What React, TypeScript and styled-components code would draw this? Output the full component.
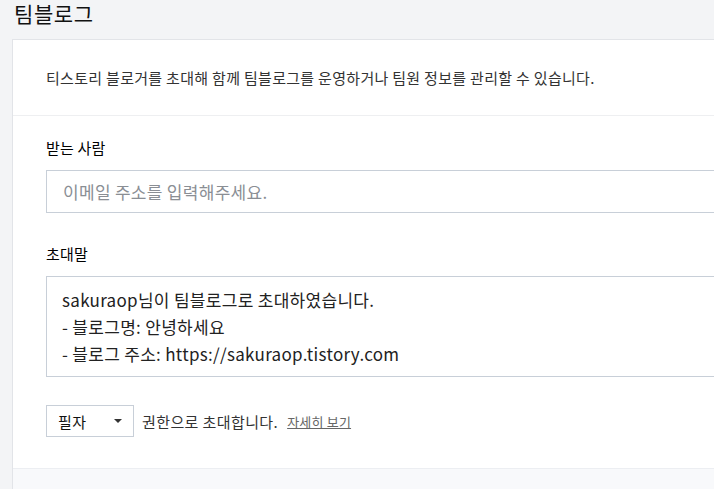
import React from "react";
import styled, { createGlobalStyle } from "styled-components";

const Global = createGlobalStyle`
  html, body { margin: 0; padding: 0; background: #f3f4f6; overflow: hidden; }
  body { font-family: "Noto Sans CJK KR", "Noto Sans", sans-serif; color: #222; }
`;

const Page = styled.div`
  padding: 0 0 0 12px;
  width: 820px;
`;

const Title = styled.h2`
  margin: 0;
  padding: 1px 0 0 2px;
  height: 38px;
  font-size: 21px;
  line-height: 25px;
  font-weight: 400;
  letter-spacing: 0.6px;
  color: #111;
`;

const Card = styled.div`
  background: #fff;
  border: 1px solid #e2e4e8;
`;

const Intro = styled.p`
  margin: 0;
  padding: 27px 33px 26px;
  font-size: 15px;
  line-height: 22px;
  letter-spacing: 0.3px;
  color: #333;
  border-bottom: 1px solid #eeeff1;
`;

const Form = styled.div`
  padding: 22px 0 31px 33px;
  border-bottom: 1px solid #eceef2;
`;

const Label = styled.div<{ $top?: number }>`
  font-size: 15px;
  line-height: 20px;
  font-weight: 400;
  letter-spacing: 0.2px;
  color: #000;
  margin-top: ${(p) => p.$top ?? 0}px;
  margin-bottom: 12px;
`;

const Input = styled.div`
  box-sizing: border-box;
  height: 43px;
  border: 1px solid #c8cfd8;
  padding: 0 16px;
  font-size: 17px;
  line-height: 41px;
  letter-spacing: 0.3px;
  color: #8a8e94;
`;

const TextArea = styled.div`
  box-sizing: border-box;
  height: 101px;
  border: 1px solid #c8cfd8;
  padding: 9px 15px 8px;
  font-size: 17px;
  line-height: 27px;
  letter-spacing: 0.3px;
  color: #222;
`;

const Row = styled.div`
  display: flex;
  align-items: center;
  margin-top: 28px;
  font-size: 15px;
  letter-spacing: 0.4px;
  color: #333;
`;

const Select = styled.div`
  box-sizing: border-box;
  width: 88px;
  height: 32px;
  border: 1px solid #c8cfd8;
  display: flex;
  align-items: center;
  justify-content: space-between;
  padding: 0 11px 0 11px;
  font-size: 15px;
  color: #111;
  margin-right: 8px;
`;

const Caret = styled.span`
  width: 0;
  height: 0;
  border-left: 4px solid transparent;
  border-right: 4px solid transparent;
  border-top: 4px solid #333;
`;

const More = styled.a`
  margin-left: 9px;
  font-size: 13px;
  letter-spacing: 0.2px;
  color: #666;
  text-decoration: underline;
`;

const Footer = styled.div`
  height: 40px;
  background: #f8f9fb;
`;

export default function App() {
  return (
    <>
      <Global />
      <Page>
        <Title>팀블로그</Title>
        <Card>
          <Intro>티스토리 블로거를 초대해 함께 팀블로그를 운영하거나 팀원 정보를 관리할 수 있습니다.</Intro>
          <Form>
            <Label>받는 사람</Label>
            <Input>이메일 주소를 입력해주세요.</Input>
            <Label $top={31}>초대말</Label>
            <TextArea>
              sakuraop님이 팀블로그로 초대하였습니다.
              <br />- 블로그명: 안녕하세요
              <br />- 블로그 주소: https://sakuraop.tistory.com
            </TextArea>
            <Row>
              <Select>
                필자
                <Caret />
              </Select>
              권한으로 초대합니다.
              <More>자세히 보기</More>
            </Row>
          </Form>
          <Footer />
        </Card>
      </Page>
    </>
  );
}
